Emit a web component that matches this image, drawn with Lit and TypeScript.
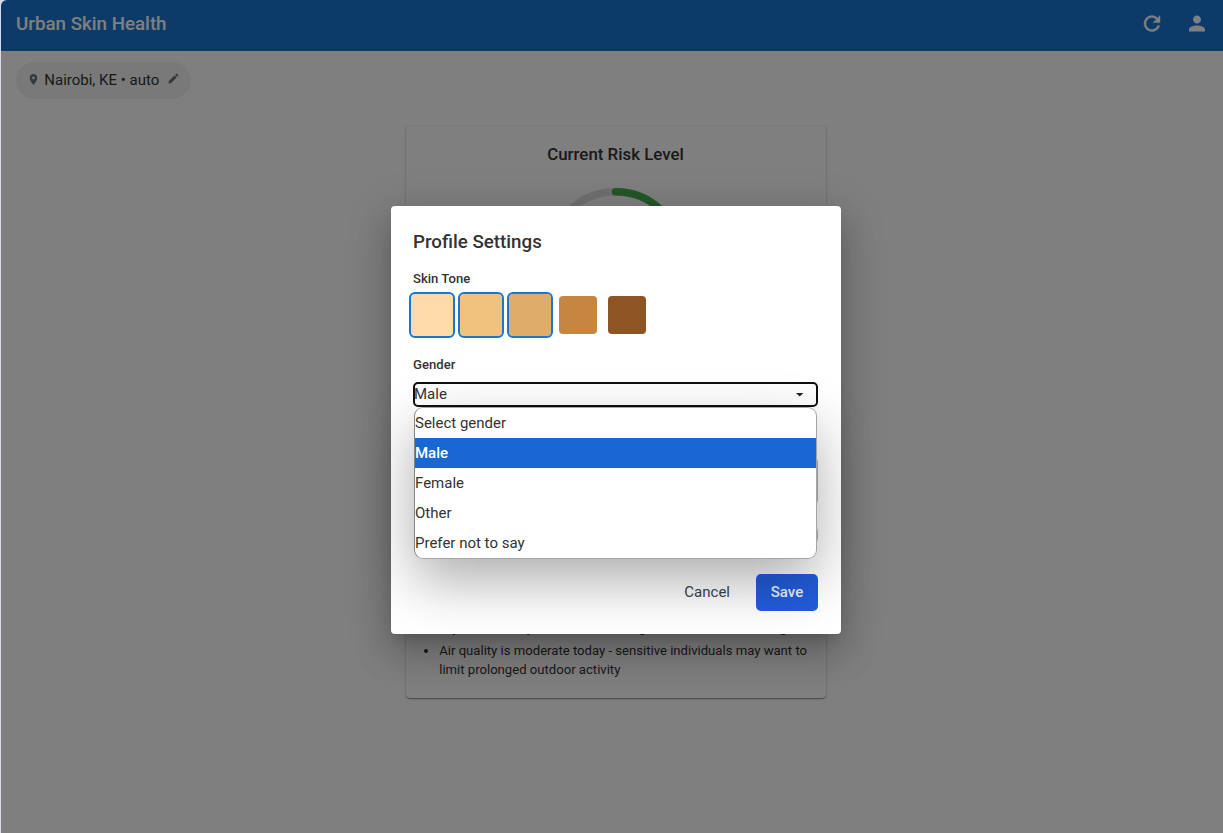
import { LitElement, html, css } from "lit";
import { customElement, state } from "lit/decorators.js";

const TONES = [
  { color: "#ffdbac", marked: true },
  { color: "#f1c27d", marked: true },
  { color: "#e0ac69", marked: true },
  { color: "#c68642", marked: false },
  { color: "#8d5524", marked: false },
];
const GENDERS = ["Select gender", "Male", "Female", "Other", "Prefer not to say"];

@customElement("profile-dialog")
export class ProfileDialog extends LitElement {
  static styles = css`
    :host { display: block; box-sizing: border-box; width: 450px; height: 428px; padding: 23px 23px 23px 22px;
      background: #fff; border-radius: 4px; color: #333;
      box-shadow: 0 10px 14px -7px rgba(0,0,0,.2), 0 22px 36px 3px rgba(0,0,0,.14), 0 8px 43px 7px rgba(0,0,0,.12); }
    .panel { display: flex; flex-direction: column; height: 100%; }
    .title { margin: 0; font-size: 18.75px; line-height: 27px; font-weight: 500; }
    .label { font-size: 13.125px; line-height: 20px; font-weight: 500; }
    .tone-label { margin-top: 13px; }
    .tones { display: flex; gap: 11px; margin-top: 7px; height: 38px; }
    .tone { width: 38px; height: 38px; border-radius: 4px; }
    .tone.marked { width: 42px; height: 42px; margin: -2px; outline: 2px solid #1976d2; border-radius: 4px; }
    .tone.marked + .tone:not(.marked) { margin-left: 1px; }
    .tone.marked:nth-child(3) { margin-right: -4px; }
    .gender-label { margin-top: 21px; }
    .select { position: relative; margin-top: 7px; box-sizing: border-box; width: 405px; height: 25px; border: 2px solid #101010; border-radius: 5px;
      display: flex; align-items: center; justify-content: space-between; font-size: 15px; line-height: 20px; padding: 0 12.5px 0 0; }
    .value { margin: -1px 0 0 -1px; }
    .halo, .menu { position: absolute; top: 23px; left: -1px; width: 403px; height: 152px; box-sizing: border-box; border-radius: 9px; }
    .halo { box-shadow: 0 22px 56px rgba(0,0,0,.32); }
    .menu { border: 1px solid #a5a5a5; border-left-color: #858585; background: #fff; overflow: hidden; }
    .edge { position: absolute; box-sizing: border-box; left: 390px; width: 13px; border: 1px solid #b4b4b4; border-radius: 5px; }
    .edge-a { top: 73px; height: 48px; }
    .edge-b { top: 141px; height: 20px; border-radius: 8px; }
    .option { height: 30px; line-height: 30px; }
    .option.on { background: #1967d2; color: #fff; font-weight: 500; }
    .actions { margin-top: auto; display: flex; justify-content: flex-end; gap: 11px; }
    .btn { border: 0; margin: 0; box-sizing: border-box; height: 37px; border-radius: 5px; font: 400 15px/37px Roboto, sans-serif; padding: 0 15px; background: none; color: #3b4350; }
    .save { background: #235ddc; color: #eef1fb; font-weight: 500; width: 62px; padding: 0; }
  `;

  @state() private gender = "Male";

  render() {
    return html`<div class="panel">
      <h2 class="title">Profile Settings</h2>
      <div class="label tone-label">Skin Tone</div>
      <div class="tones">
        ${TONES.map((t) => html`<div class="tone ${t.marked ? "marked" : ""}" style="background:${t.color}"></div>`)}
      </div>
      <div class="label gender-label">Gender</div>
      <div class="select">
        <span class="value">${this.gender}</span>
        <svg width="8" height="4" viewBox="0 0 8 4"><path d="M0 0h7.4L3.7 3.4z" fill="#222" /></svg>
        <div class="edge edge-a"></div>
        <div class="edge edge-b"></div>
        <div class="halo"></div>
        <div class="menu">
          ${GENDERS.map((g) => html`<div class="option ${g === this.gender ? "on" : ""}" @click=${() => (this.gender = g)}>${g}</div>`)}
        </div>
      </div>
      <div class="actions">
        <button class="btn">Cancel</button>
        <button class="btn save">Save</button>
      </div>
    </div>`;
  }
}

@customElement("app-root")
export class AppRoot extends LitElement {
  static styles = css`
    :host { display: block; position: relative; box-sizing: border-box; width: 100%; height: 833px; overflow: hidden;
      padding-left: 1px; background: #d5d9e8; font-family: Roboto, sans-serif; color: #333; }
    .page { height: 833px; background: #fff; border-top-left-radius: 6px; overflow: hidden; }
    .bar { height: 51px; box-sizing: border-box; background: #1976d2; color: #fff; display: flex; align-items: center; padding: 0 14.5px 4px 15px; }
    .brand { flex: 1; font-size: 18.75px; font-weight: 500; line-height: 30px; }
    .icons { display: flex; gap: 21px; }
    .icons svg { display: block; }
    .chip { display: flex; align-items: center; box-sizing: border-box; width: 175px; height: 37px; margin: 11px 0 0 15px; padding: 0 0 2px 11.3px; border-radius: 19px; background: #f3f3f3; font-size: 15px; }
    .place { margin-right: 4px; }
    .pencil { margin: 0 0 2px 7.5px; }
    .card { box-sizing: border-box; width: 420px; height: 572px; margin: 27px 0 0 405px; border-radius: 4px; background: #fff;
      box-shadow: 0 2px 1px -1px rgba(0,0,0,.2), 0 1px 1px rgba(0,0,0,.14), 0 1px 3px rgba(0,0,0,.2), 0 0 1px rgba(0,0,0,.15);
      display: flex; flex-direction: column; align-items: center; padding: 15px 16px 19px 15px; }
    .heading { margin: 0; font-size: 16.875px; line-height: 27px; font-weight: 500; }
    .gauge { margin-top: 20px; }
    .tips { margin: auto 0 0; padding: 0 0 0 18.4px; width: 371px; font-size: 13.125px; line-height: 19px; }
    .tips li + li { margin-top: 4px; }
    .shade { position: absolute; inset: 0 0 0 1px; background: rgba(0,0,0,.5); border-top-left-radius: 6px; }
    .dialog { position: absolute; left: 391px; top: 206px; }
  `;

  render() {
    return html`
      <div class="page">
        <header class="bar">
          <div class="brand">Urban Skin Health</div>
          <div class="icons">
            <svg width="24" height="24" viewBox="0 0.4 24 24" fill="#fff"><path d="M17.65 6.35C16.2 4.9 14.21 4 12 4c-4.42 0-7.99 3.58-7.99 8s3.57 8 7.99 8c3.73 0 6.84-2.55 7.73-6h-2.08c-.82 2.33-3.04 4-5.65 4-3.31 0-6-2.69-6-6s2.69-6 6-6c1.66 0 3.14.69 4.22 1.78L13 11h7V4z" stroke="#fff" stroke-width=".4" /></svg>
            <svg width="24" height="24" viewBox="0 0.4 24 24" fill="#fff"><path d="M12 12c2.21 0 4-1.79 4-4s-1.79-4-4-4-4 1.79-4 4 1.79 4 4 4m0 2c-2.67 0-8 1.34-8 4v2h16v-2c0-2.66-5.33-4-8-4" /></svg>
          </div>
        </header>
        <div class="chip">
          <svg class="place" width="13" height="13" viewBox="0 0 24 24" fill="#6b7280"><path d="M12 2C8.13 2 5 5.13 5 9c0 5.25 7 13 7 13s7-7.75 7-13c0-3.87-3.13-7-7-7m0 9.5c-1.38 0-2.5-1.12-2.5-2.5s1.12-2.5 2.5-2.5 2.5 1.12 2.5 2.5-1.12 2.5-2.5 2.5" /></svg>
          <span>Nairobi, KE • auto</span>
          <svg class="pencil" width="13" height="13" viewBox="0 0 24 24" fill="#6b7280"><path d="M3 17.25V21h3.75L17.81 9.94l-3.75-3.75zM20.71 7.04c.39-.39.39-1.02 0-1.41l-2.34-2.34a.996.996 0 0 0-1.41 0l-1.83 1.83 3.75 3.75z" /></svg>
        </div>
        <section class="card">
          <h2 class="heading">Current Risk Level</h2>
          <svg class="gauge" width="139" height="139" viewBox="0 0 139 139" fill="none" stroke-width="7.5">
            <circle cx="69.5" cy="69.5" r="65.7" stroke="#e0e0e0" />
            <path d="M69.5 3.8A65.7 65.7 0 0 1 135.2 69.5" stroke="#4caf50" stroke-linecap="round" />
          </svg>
          <ul class="tips">
            <li>Dry climate may cause some changes, and use moisturizing</li>
            <li>Air quality is moderate today - sensitive individuals may want to limit prolonged outdoor activity</li>
          </ul>
        </section>
      </div>
      <div class="shade"></div>
      <profile-dialog class="dialog"></profile-dialog>
    `;
  }
}
